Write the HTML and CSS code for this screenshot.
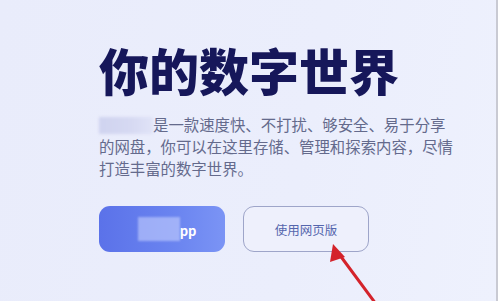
FILE: index.html
```html
<!DOCTYPE html>
<html lang="zh">
<head>
<meta charset="utf-8">
<link rel="stylesheet" href="styles.css">
</head>
<body>
<div class="page">
  <main class="hero">
    <h1 class="title">你的数字世界</h1>
    <p class="desc"><span class="blur-block"></span>是一款速度快、不打扰、够安全、易于分享<br>的网盘，你可以在这里存储、管理和探索内容，尽情<br>打造丰富的数字世界。</p>
    <div class="actions">
      <button class="btn btn-primary"><span class="blur-label"></span><span class="btn-tail">pp</span></button>
      <button class="btn btn-outline">使用网页版</button>
    </div>
  </main>
  <svg class="arrow" width="498" height="301" viewBox="0 0 498 301">
    <line x1="376" y1="304" x2="339" y2="254" stroke="#d4232b" stroke-width="3" stroke-linecap="round"/>
    <polygon points="333,244 345,257 330,262" fill="#d4232b"/>
  </svg>
</div>
</body>
</html>
```
FILE: styles.css
```css
html, body {
  margin: 0;
  padding: 0;
}
body {
  width: 498px;
  height: 301px;
  overflow: hidden;
  font-family: "Noto Sans CJK SC", "Noto Sans", sans-serif;
}
.page {
  position: relative;
  width: 496px;
  height: 301px;
  background: linear-gradient(100deg, #e9ecfb 0%, #ebeefc 60%, #eef1fd 100%);
  border-right: 2px solid #c9cad3;
}
.hero {
  padding: 32px 0 0 99px;
}
.title {
  margin: 0;
  font-size: 50px;
  line-height: 74px;
  font-weight: 900;
  color: #16175a;
  letter-spacing: 0;
}
.desc {
  margin: 7px 0 0;
  font-size: 15.4px;
  line-height: 22px;
  color: #646a8c;
  white-space: nowrap;
}
.blur-block {
  display: inline-block;
  width: 54px;
  height: 17px;
  vertical-align: -3px;
  background: linear-gradient(90deg, #cfd3ef, #d6d9f2 60%, #e0e3f7);
  filter: blur(1.5px);
}
.actions {
  display: flex;
  gap: 18px;
  margin-top: 27px;
}
.btn {
  box-sizing: border-box;
  width: 126px;
  height: 46px;
  border-radius: 11px;
  font-family: "Noto Sans CJK SC", sans-serif;
  font-size: 12.5px;
  display: flex;
  align-items: center;
  justify-content: center;
  padding: 0;
}
.btn-primary {
  border: none;
  background: linear-gradient(90deg, #5b72e9 0%, #6a84f0 60%, #7b94f5 100%);
  color: #ffffff;
  gap: 0;
}
.blur-label {
  display: inline-block;
  width: 42px;
  height: 24px;
  margin-left: 10px;
  background: rgba(205, 215, 255, 0.55);
  filter: blur(1px);
}
.btn-tail {
  font-size: 13px;
  font-weight: 600;
  margin-top: 2px;
}
.btn-outline {
  background: #eef0fc;
  border: 1.5px solid #9ea5c9;
  color: #5566ad;
}
.arrow {
  position: absolute;
  left: 0;
  top: 0;
  pointer-events: none;
}
```
